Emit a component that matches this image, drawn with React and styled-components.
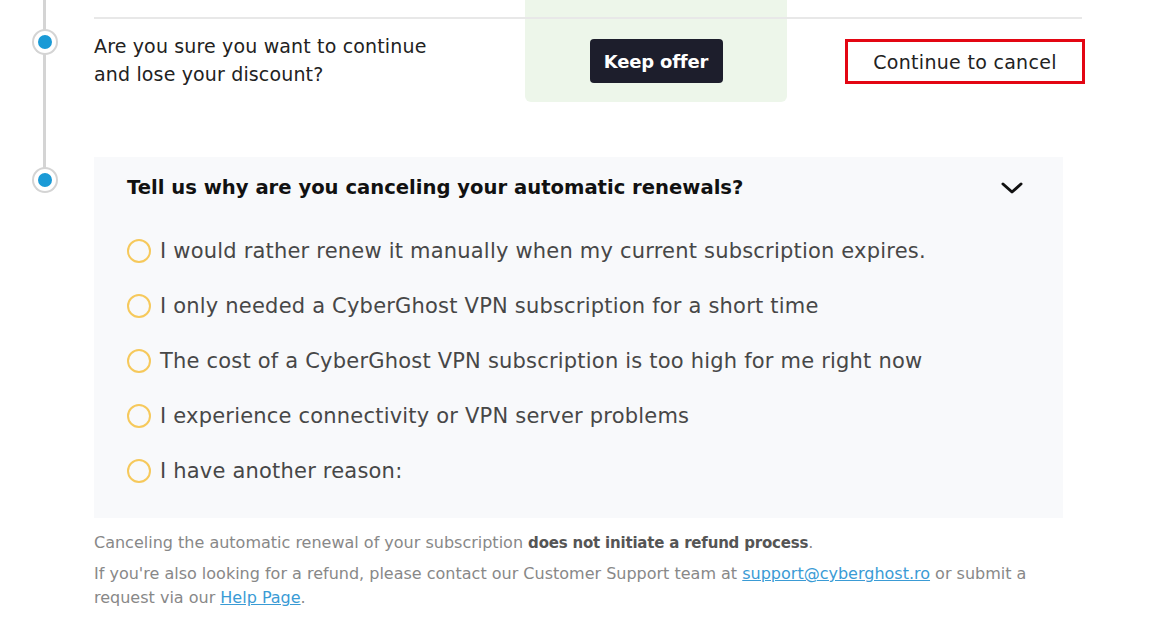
import React, { useState } from 'react'
import styled, { createGlobalStyle } from 'styled-components'

const GlobalStyle = createGlobalStyle`
  body {
    margin: 0;
    background: #fff;
    font-family: "DejaVu Sans", "Noto Sans", sans-serif;
  }
`

const reasons = [
  'I would rather renew it manually when my current subscription expires.',
  'I only needed a CyberGhost VPN subscription for a short time',
  'The cost of a CyberGhost VPN subscription is too high for me right now',
  'I experience connectivity or VPN server problems',
  'I have another reason:',
]

const Chevron = () => (
  <svg width="22" height="12" viewBox="0 0 22 12">
    <polyline points="2,2 11,10 20,2" fill="none" stroke="#111" strokeWidth="3" strokeLinecap="round" strokeLinejoin="round" />
  </svg>
)

const App = () => {
  const [picked, setPicked] = useState(null)

  return (
    <>
      <GlobalStyle />
      <Page>
        <Step $pad="55px">
          <Marker $dot="42px" $full />
          <OfferRow>
            <Rule />
            <OfferCell />
            <Question>
              Are you sure you want to continue
              <br />
              and lose your discount?
            </Question>
            <KeepCell>
              <KeepButton>Keep offer</KeepButton>
            </KeepCell>
            <CancelCell>
              <CancelButton>Continue to cancel</CancelButton>
            </CancelCell>
          </OfferRow>
        </Step>

        <Step>
          <Marker $dot="23px" />
          <Content>
            <Panel>
              <PanelHead>
                <h2>Tell us why are you canceling your automatic renewals?</h2>
                <Chevron />
              </PanelHead>
              <Options>
                {reasons.map((r, i) => (
                  <Option key={i} onClick={() => setPicked(i)}>
                    <Radio $on={picked === i} />
                    <span>{r}</span>
                  </Option>
                ))}
              </Options>
            </Panel>
            <Notes>
              <p>
                Canceling the automatic renewal of your subscription <b>does not initiate a refund process</b>.
              </p>
              <p>
                If you're also looking for a refund, please contact our Customer Support team at{' '}
                <a href="#">support@cyberghost.ro</a> or submit a
                <br />
                request via our <a href="#">Help Page</a>.
              </p>
            </Notes>
          </Content>
        </Step>
      </Page>
    </>
  )
}

export default App

const Page = styled.div`
  width: 1159px;
  display: flex;
  flex-direction: column;
`

const Step = styled.div`
  display: flex;
  padding-bottom: ${(p) => p.$pad || '0'};
`

const Marker = styled.div`
  position: relative;
  width: 94px;
  flex-shrink: 0;

  &::before {
    content: '';
    position: absolute;
    left: 43px;
    top: 0;
    width: 3px;
    background: #d4d4d4;
    height: ${(p) => (p.$full ? 'calc(100% + 55px)' : p.$dot)};
  }

  &::after {
    content: '';
    position: absolute;
    left: 33.5px;
    top: calc(${(p) => p.$dot} - 11px);
    width: 14px;
    height: 14px;
    border-radius: 50%;
    background: #1a9ad6;
    border: 4px solid #fff;
    box-shadow: 0 0 0 2px #d4d4d4;
  }
`

const OfferRow = styled.div`
  display: grid;
  grid-template-columns: 431px 262px 295px;
  grid-template-rows: 17px 2px 83px;
`

const Rule = styled.div`
  grid-column: 1 / -1;
  grid-row: 2;
  background: #e8e8e8;
  z-index: 1;
`

const OfferCell = styled.div`
  grid-column: 2;
  grid-row: 1 / -1;
  background: #edf6ea;
  border-radius: 0 0 6px 6px;
`

const Question = styled.div`
  grid-column: 1;
  grid-row: 3;
  padding-top: 13px;
  font-size: 19px;
  letter-spacing: 0.15px;
  line-height: 28px;
  font-weight: 500;
  color: #222;
  white-space: nowrap;
`

const KeepCell = styled.div`
  grid-column: 2;
  grid-row: 3;
  display: flex;
  justify-content: center;
  padding-top: 20px;
  z-index: 1;
`

const KeepButton = styled.button`
  height: 44px;
  width: 133px;
  border: none;
  border-radius: 4px;
  background: #1d1e2c;
  color: #fff;
  font-family: inherit;
  font-size: 18px;
  font-weight: 700;
  letter-spacing: -0.2px;
  cursor: pointer;
`

const CancelCell = styled.div`
  grid-column: 3;
  grid-row: 3;
  padding: 20px 0 0 58px;
`

const CancelButton = styled.button`
  height: 45px;
  width: 240px;
  border: 3px solid #e30613;
  background: #fff;
  color: #222;
  font-family: inherit;
  font-size: 19px;
  letter-spacing: 0.3px;
  font-weight: 500;
  cursor: pointer;
  white-space: nowrap;
`

const Content = styled.div`
  width: 969px;
`

const Panel = styled.div`
  background: #f8f9fb;
  padding: 17px 40px 32px 33px;
`

const PanelHead = styled.div`
  display: flex;
  align-items: center;
  justify-content: space-between;

  h2 {
    margin: 0;
    font-size: 19.6px;
    line-height: 28px;
    font-weight: 700;
    color: #111;
  }
`

const Options = styled.div`
  display: flex;
  flex-direction: column;
  gap: 25px;
  margin-top: 34px;
`

const Option = styled.label`
  display: flex;
  align-items: center;
  gap: 9px;
  height: 30px;
  font-size: 21px;
  letter-spacing: 0.2px;
  color: #474747;
  cursor: pointer;
  white-space: nowrap;
`

const Radio = styled.span`
  width: 20px;
  height: 20px;
  border-radius: 50%;
  border: 2px solid #f6c95c;
  background: ${(p) => (p.$on ? '#f6c95c' : 'transparent')};
  flex-shrink: 0;
`

const Notes = styled.div`
  margin-top: 13px;
  font-size: 16px;
  line-height: 24px;
  color: #888;

  p {
    margin: 0 0 7px;
    white-space: nowrap;
  }

  b {
    color: #555;
    font-weight: 700;
    font-size: 15px;
    letter-spacing: -0.2px;
  }

  a {
    color: #3a9bd5;
  }
`
